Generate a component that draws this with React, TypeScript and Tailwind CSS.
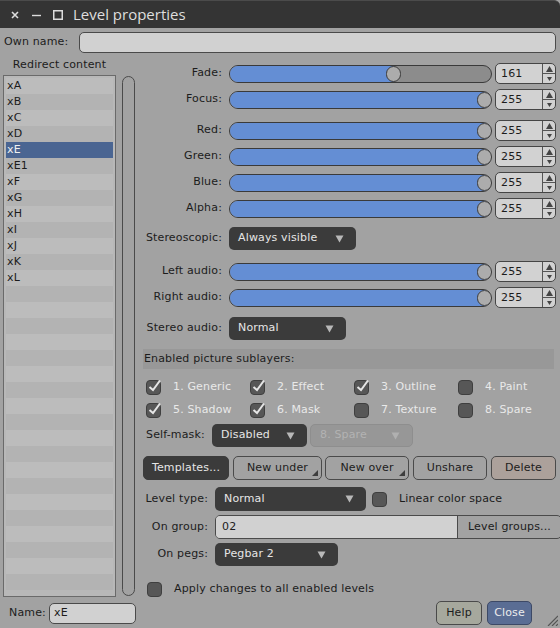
import React from 'react'

const Tri = ({ color = '#b8b8b8' }: { color?: string }) => (
  <svg width="9" height="8" viewBox="0 0 9 8">
    <path d="M0.5 0.5 H8.5 L4.5 7.5 Z" fill={color} />
  </svg>
)

const Slider = ({ value }: { value: number }) => {
  const thumb = Math.round((value / 255) * 248)
  return (
    <div className="relative h-[18px] w-[263px] rounded-full border border-[#3a3a3a] bg-[#8c8c8c] overflow-hidden">
      <div className="h-full bg-[#648ed4]" style={{ width: thumb + 7 }} />
      <div
        className="absolute top-0 h-full w-[15px] rounded-full border border-[#3a3a3a] bg-[#acacac]"
        style={{ left: thumb - 1 }}
      />
    </div>
  )
}

const SpinBox = ({ value }: { value: number }) => (
  <div className="flex h-[21px] w-[61px] rounded-[5px] border border-[#454545] bg-[#d2d2d2] overflow-hidden">
    <div className="flex flex-1 items-center pl-[5px] pt-[1px]">{value}</div>
    <div className="flex w-[13px] flex-col border-l border-[#555]">
      <div className="flex flex-1 items-center justify-center border-b border-[#555]">
        <svg width="7" height="6" viewBox="0 0 7 6"><path d="M3.5 0 L7 6 H0 Z" fill="#444" /></svg>
      </div>
      <div className="flex flex-1 items-center justify-center">
        <svg width="5" height="4" viewBox="0 0 5 4"><path d="M0 0 H5 L2.5 4 Z" fill="#444" /></svg>
      </div>
    </div>
  </div>
)

const SliderRow = ({ label, value, className = '' }: { label: string; value: number; className?: string }) => (
  <div className={`flex h-[21px] items-center ${className}`}>
    <div className="mr-[7px] w-[79px] text-right">{label}</div>
    <Slider value={value} />
    <div className="ml-[3px]">
      <SpinBox value={value} />
    </div>
  </div>
)

const Dropdown = ({ text, w, disabled = false }: { text: string; w: string; disabled?: boolean }) => (
  <div
    className={`flex h-[23px] ${w} items-center justify-between rounded-[5px] pl-[9px] pr-[12px] ${
      disabled ? 'border border-[#8e8e8e] bg-[#979797] text-[#b3b3b3]' : 'bg-[#3b3b3b] text-[#e6e6e6]'
    }`}
  >
    <span>{text}</span>
    <Tri color={disabled ? '#b0b0b0' : '#b8b8b8'} />
  </div>
)

const Checkbox = ({ checked = false }: { checked?: boolean }) => (
  <div className="relative h-[15px] w-[15px] shrink-0 rounded-[4px] border border-[#3f3f3f] bg-[#575757]">
    {checked && (
      <svg className="absolute -top-[3px] left-0" width="16" height="16" viewBox="0 0 16 16">
        <path d="M2.5 9 L6 12 L13 2.5" fill="none" stroke="#e6e6e6" strokeWidth="2" />
      </svg>
    )}
  </div>
)

const Button = ({ text, w, className = '', corner = false }: { text: string; w: string; className?: string; corner?: boolean }) => (
  <div
    className={`relative flex h-[24px] ${w} items-center justify-center rounded-[5px] border ${
      className || 'border-[#4a4a4a] text-[#1c1c1c]'
    }`}
  >
    {text}
    {corner && (
      <svg className="absolute bottom-[3px] right-[3px]" width="6" height="6" viewBox="0 0 6 6">
        <path d="M6 0 V6 H0 Z" fill="#3e3e3e" />
      </svg>
    )}
  </div>
)

const items = ['xA', 'xB', 'xC', 'xD', 'xE', 'xE1', 'xF', 'xG', 'xH', 'xI', 'xJ', 'xK', 'xL']

const sublayers: [string, boolean][] = [
  ['1. Generic', true],
  ['2. Effect', true],
  ['3. Outline', true],
  ['4. Paint', false],
  ['5. Shadow', true],
  ['6. Mask', true],
  ['7. Texture', false],
  ['8. Spare', false],
]

export default function App() {
  const rows = Array.from({ length: 32 }, (_, i) => items[i] ?? '')

  return (
    <div className="relative flex h-[628px] w-[560px] flex-col overflow-hidden bg-[#a2a2a2] font-['DejaVu_Sans',sans-serif] text-[11px] tracking-[0.15px] text-[#1c1c1c]">
      {/* Title bar */}
      <div className="flex h-[28px] shrink-0 items-center rounded-tr-[6px] border-t border-[#4b4b4b] bg-[#343434] tracking-normal">
        <svg className="ml-[11px]" width="8" height="8" viewBox="0 0 8 8">
          <path d="M1 1 L7 7 M7 1 L1 7" stroke="#dcdcdc" strokeWidth="1.6" />
        </svg>
        <svg className="ml-[13px]" width="9" height="8" viewBox="0 0 9 8">
          <path d="M0 4.5 H9" stroke="#dcdcdc" strokeWidth="1.4" />
        </svg>
        <svg className="ml-[12px]" width="10" height="10" viewBox="0 0 10 10">
          <rect x="0.75" y="0.75" width="8.5" height="8.5" fill="none" stroke="#dcdcdc" strokeWidth="1.5" />
        </svg>
        <span className="ml-[10px] font-['Open_Sans',sans-serif] text-[15px] text-[#dedede]">Level properties</span>
      </div>

      {/* Own name */}
      <div className="flex h-[28px] shrink-0 items-center pl-[4px] pr-[4px]">
        <div className="w-[75px]">Own name:</div>
        <div className="h-[21px] flex-1 rounded-[5px] border border-[#4a4a4a] bg-[#d1d1d1]" />
      </div>

      {/* Main */}
      <div className="flex h-[542px] shrink-0">
        {/* Left column */}
        <div className="flex w-[143px] shrink-0 flex-col pl-[3px]">
          <div className="flex h-[19px] w-[113px] items-center justify-center">Redirect content</div>
          <div className="flex">
            <div className="h-[522px] w-[113px] overflow-hidden border border-[#6a6a6a] bg-[#b8b8b8] p-[2px]">
              {rows.map((r, i) => (
                <div
                  key={i}
                  className={`flex h-[16px] items-center pl-[1px] ${
                    r === 'xE'
                      ? 'bg-[#4a6592] text-[#f0f0f0]'
                      : i % 2 === 0
                        ? 'bg-[#bcbcbc]'
                        : 'bg-[#b3b3b3]'
                  }`}
                >
                  {r}
                </div>
              ))}
            </div>
            <div className="ml-[6px] mt-[1px] h-[520px] w-[13px] rounded-full border border-[#4a4a4a]" />
          </div>
        </div>

        {/* Right column */}
        <div className="flex flex-1 flex-col pr-[4px]">
          <SliderRow label="Fade:" value={161} className="mt-[7px]" />
          <SliderRow label="Focus:" value={255} className="mt-[5px]" />
          <SliderRow label="Red:" value={255} className="mt-[10px]" />
          <SliderRow label="Green:" value={255} className="mt-[5px]" />
          <SliderRow label="Blue:" value={255} className="mt-[5px]" />
          <SliderRow label="Alpha:" value={255} className="mt-[5px]" />

          <div className="mt-[8px] flex items-center">
            <div className="mr-[7px] w-[79px] text-right">Stereoscopic:</div>
            <Dropdown text="Always visible" w="w-[127px]" />
          </div>

          <SliderRow label="Left audio:" value={255} className="mt-[11px]" />
          <SliderRow label="Right audio:" value={255} className="mt-[5px]" />

          <div className="mt-[9px] flex items-center">
            <div className="mr-[7px] w-[79px] text-right">Stereo audio:</div>
            <Dropdown text="Normal" w="w-[117px]" />
          </div>

          <div className="mt-[9px] flex h-[20px] w-[411px] items-center bg-[#989898] pl-[1px]">
            Enabled picture sublayers:
          </div>

          <div className="mt-[7px] grid grid-cols-[104px_104px_104px_104px] pl-[3px]">
            {sublayers.map(([name, on]) => (
              <div key={name} className="flex h-[23px] items-center">
                <Checkbox checked={on} />
                <span className="ml-[12px] text-[#e9e9e9]">{name}</span>
              </div>
            ))}
          </div>

          <div className="mt-[2px] flex items-center">
            <div className="w-[69px] pl-[3px]">Self-mask:</div>
            <Dropdown text="Disabled" w="w-[95px]" />
            <div className="ml-[3px]">
              <Dropdown text="8. Spare" w="w-[103px]" disabled />
            </div>
          </div>

          <div className="mt-[9px] flex items-center">
            <Button text="Templates..." w="w-[86px]" className="border-[#3b3b3b] bg-[#3b3b3b] text-[#e6e6e6]" />
            <div className="ml-[4px]"><Button text="New under" w="w-[89px]" corner /></div>
            <div className="ml-[3px]"><Button text="New over" w="w-[84px]" corner /></div>
            <div className="ml-[4px]"><Button text="Unshare" w="w-[74px]" /></div>
            <div className="ml-[4px]">
              <Button text="Delete" w="w-[65px]" className="border-[#4a4a4a] bg-[#aca19b] text-[#1c1c1c]" />
            </div>
          </div>

          <div className="mt-[7px] flex h-[24px] items-center">
            <div className="mr-[7px] w-[65px] text-right">Level type:</div>
            <Dropdown text="Normal" w="w-[151px] h-[24px]" />
            <div className="ml-[6px]"><Checkbox /></div>
            <span className="ml-[12px]">Linear color space</span>
          </div>

          <div className="mt-[4px] flex h-[24px] items-center">
            <div className="mr-[7px] w-[65px] text-right">On group:</div>
            <div className="flex h-[24px] flex-1 overflow-hidden rounded-[5px] border border-[#4a4a4a]">
              <div className="flex w-[241px] items-center bg-[#d1d1d1] pl-[6px]">02</div>
              <div className="flex flex-1 items-center justify-center border-l border-[#4a4a4a]">Level groups...</div>
            </div>
          </div>

          <div className="mt-[4px] flex items-center">
            <div className="mr-[7px] w-[65px] text-right">On pegs:</div>
            <Dropdown text="Pegbar 2" w="w-[123px]" />
          </div>

          <div className="mt-[15px] flex items-center pl-[4px]">
            <Checkbox />
            <span className="ml-[12px]">Apply changes to all enabled levels</span>
          </div>
        </div>
      </div>

      {/* Bottom */}
      <div className="flex h-[30px] shrink-0 items-center pl-[9px]">
        <div className="w-[40px]">Name:</div>
        <div className="flex h-[21px] w-[87px] items-center rounded-[5px] border border-[#4a4a4a] bg-[#d1d1d1] pl-[4px]">
          xE
        </div>
        <div className="ml-auto flex items-center">
          <Button text="Help" w="w-[46px]" className="border-[#4a4a4a] bg-[#a6a89d] text-[#1c1c1c]" />
          <div className="ml-[5px]">
            <Button text="Close" w="w-[45px]" className="border-[#3d4966] bg-[#5a6d94] text-[#ececec]" />
          </div>
        </div>
        <div className="w-[28px]" />
      </div>

      <svg className="absolute bottom-[2px] right-[2px]" width="12" height="12" viewBox="0 0 12 12">
        <path d="M12 2 L2 12 M12 6 L6 12 M12 10 L10 12" stroke="#555" strokeWidth="1.2" />
      </svg>
    </div>
  )
}
